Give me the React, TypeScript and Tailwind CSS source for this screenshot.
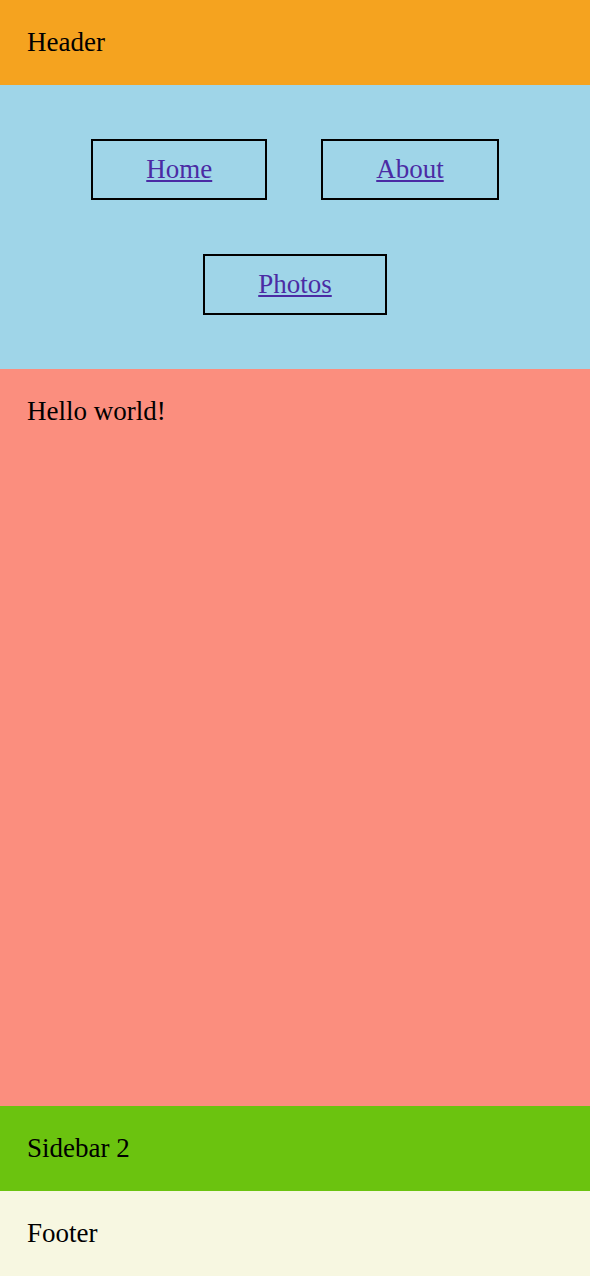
export default function App() {
  const links = ['Home', 'About', 'Photos']

  return (
    <div className="min-h-screen flex flex-col text-[27px] leading-[31px] text-black font-['Liberation_Serif',_'Times_New_Roman',_serif]">
      {/* Header */}
      <header className="bg-[#f5a31f] p-[27px]">Header</header>

      {/* Nav */}
      <nav className="bg-[#9fd5e8] p-[27px]">
        <ul className="flex flex-wrap justify-center">
          {links.map((l) => (
            <li key={l} className="m-[27px] border-2 border-black px-[53px] py-[13px]">
              <a href="#" className="underline text-[#4b2ba4]">
                {l}
              </a>
            </li>
          ))}
        </ul>
      </nav>

      {/* Main */}
      <main className="flex-1 bg-[#fb8e7e] p-[27px]">Hello world!</main>

      <aside className="bg-[#6bc30f] p-[27px]">Sidebar 2</aside>

      <footer className="bg-[#f7f7e1] p-[27px]">Footer</footer>
    </div>
  )
}
